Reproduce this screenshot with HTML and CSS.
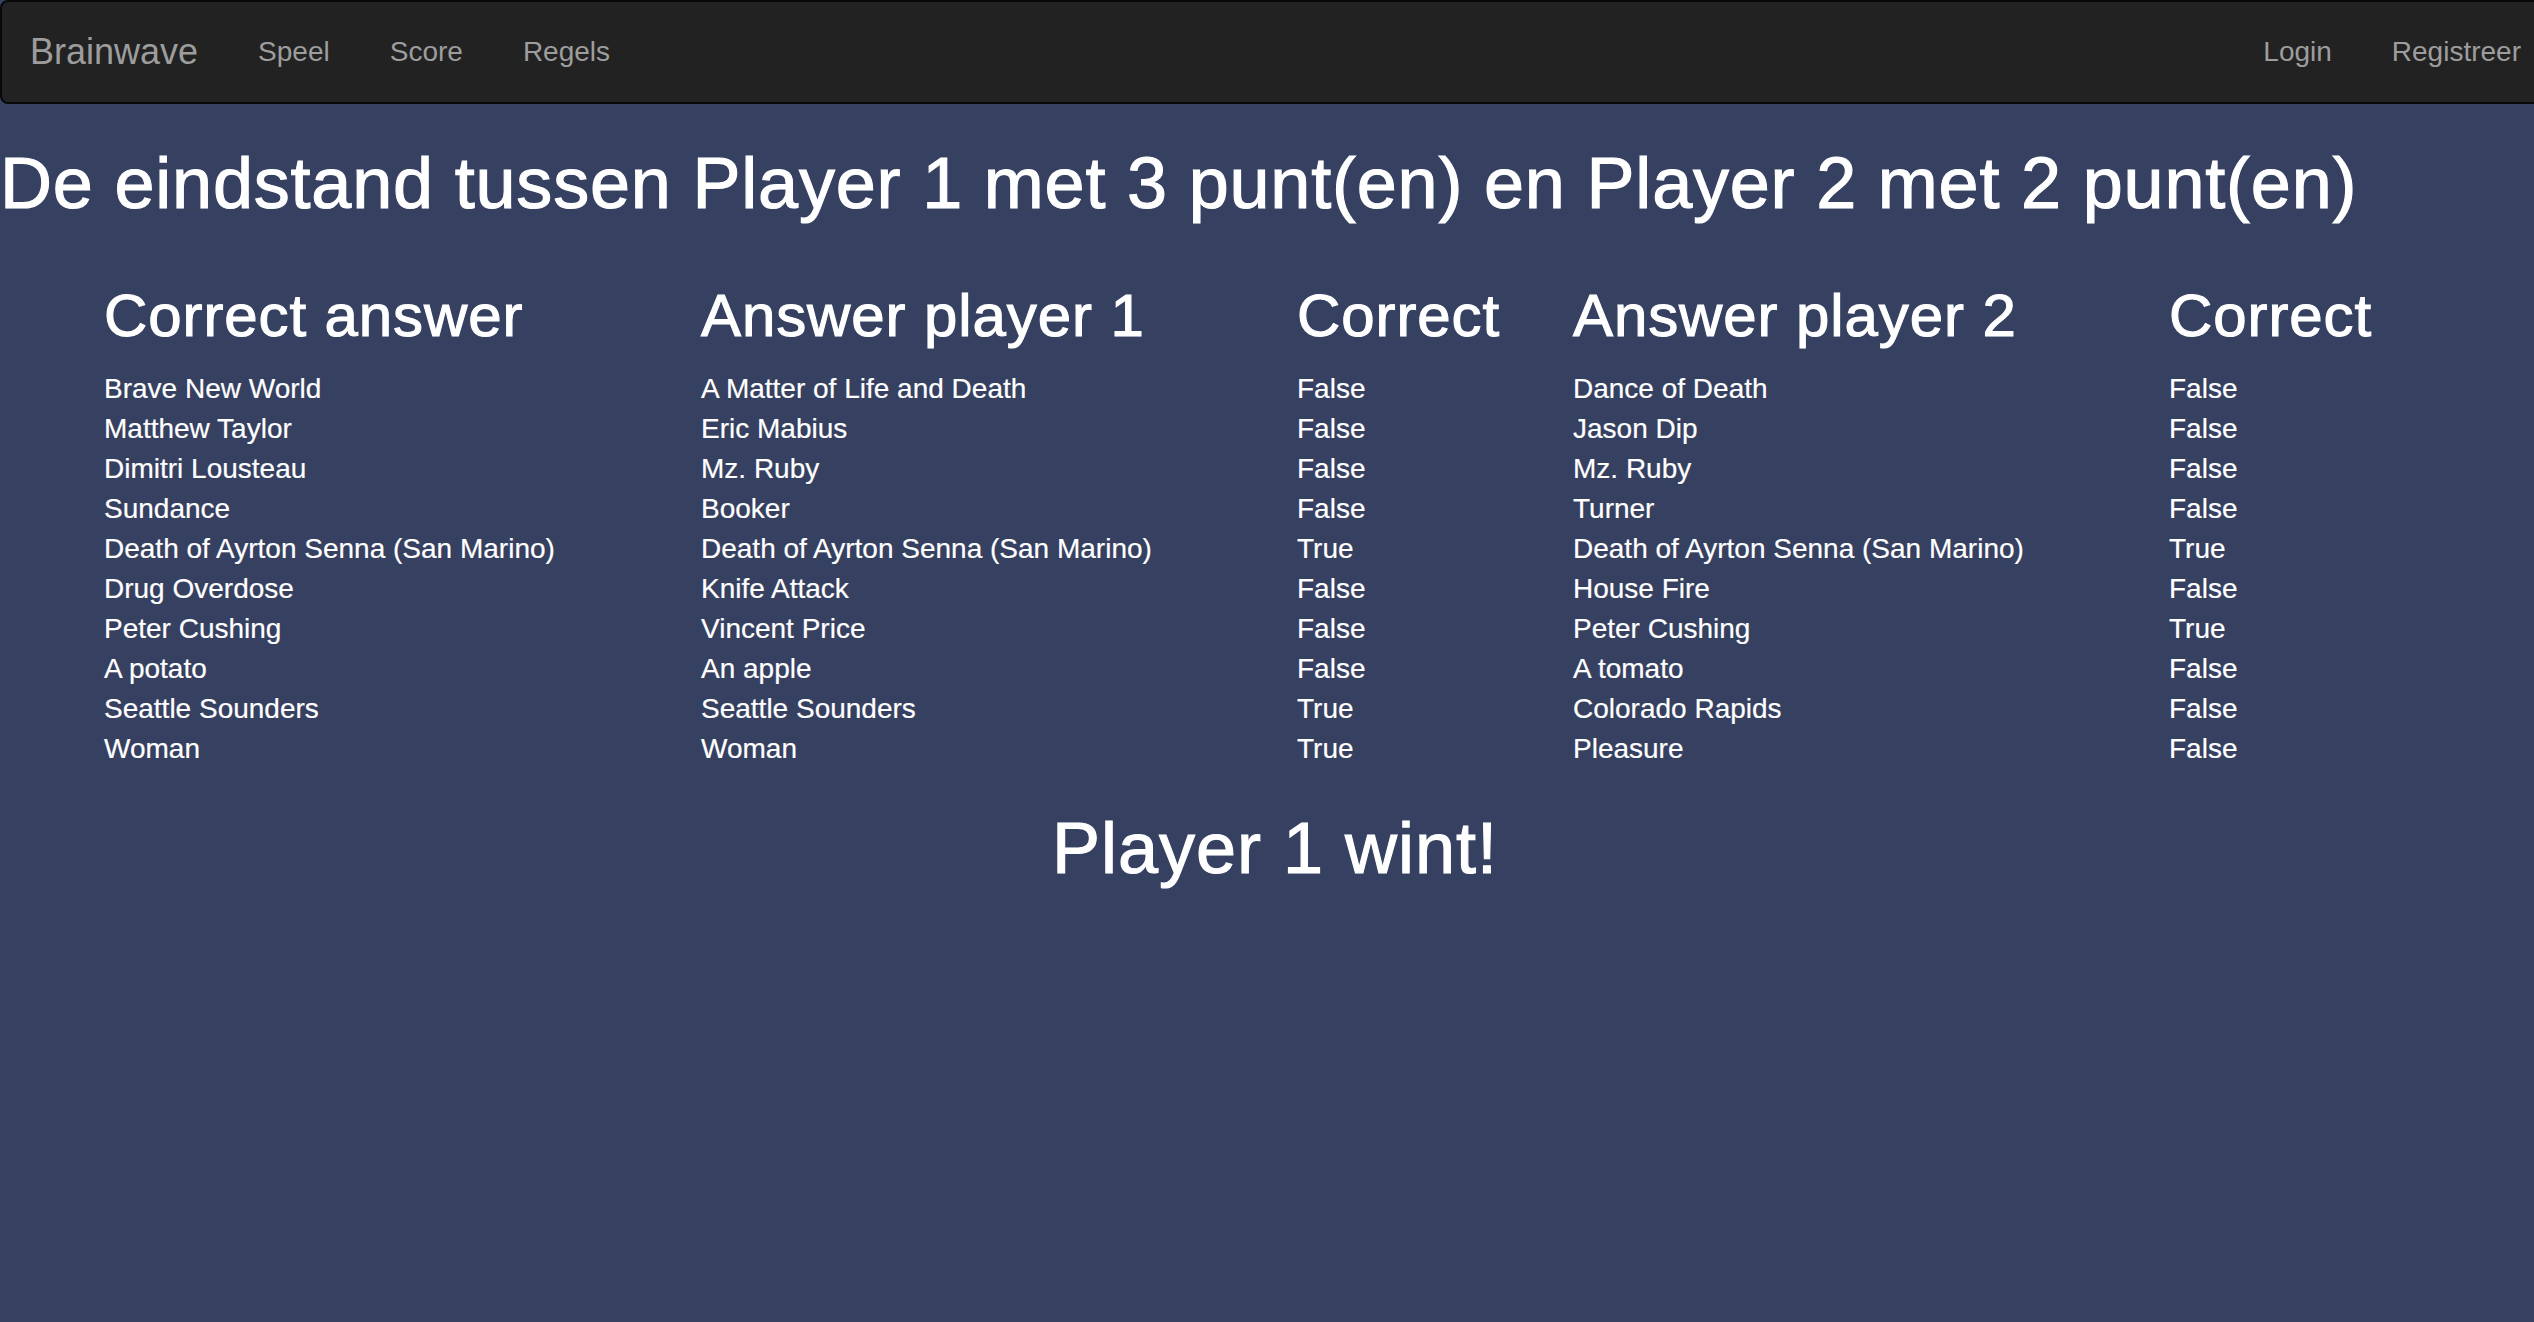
FILE: index.html
```html
<!DOCTYPE html>
<html lang="nl">
<head>
<meta charset="utf-8">
<title>Brainwave - Score</title>
<link rel="stylesheet" href="styles.css">
</head>
<body>
<div class="page">
  <nav class="navbar">
    <div class="navbar-inner">
      <a class="brand" href="#">Brainwave</a>
      <ul class="nav">
        <li><a href="#">Speel</a></li>
        <li><a href="#">Score</a></li>
        <li><a href="#">Regels</a></li>
      </ul>
      <ul class="nav nav-right">
        <li><a href="#">Login</a></li>
        <li><a href="#">Registreer</a></li>
      </ul>
    </div>
  </nav>

  <h1 class="result-title">De eindstand tussen Player 1 met 3 punt(en) en Player 2 met 2 punt(en)</h1>

  <div class="container">
    <table class="results">
      <colgroup>
        <col class="c-answer">
        <col class="c-p1">
        <col class="c-ok1">
        <col class="c-p2">
        <col class="c-ok2">
      </colgroup>
      <thead>
        <tr>
          <th><h2>Correct answer</h2></th>
          <th><h2>Answer player 1</h2></th>
          <th><h2>Correct</h2></th>
          <th><h2>Answer player 2</h2></th>
          <th><h2>Correct</h2></th>
        </tr>
      </thead>
      <tbody>
        <tr><td>Brave New World</td><td>A Matter of Life and Death</td><td>False</td><td>Dance of Death</td><td>False</td></tr>
        <tr><td>Matthew Taylor</td><td>Eric Mabius</td><td>False</td><td>Jason Dip</td><td>False</td></tr>
        <tr><td>Dimitri Lousteau</td><td>Mz. Ruby</td><td>False</td><td>Mz. Ruby</td><td>False</td></tr>
        <tr><td>Sundance</td><td>Booker</td><td>False</td><td>Turner</td><td>False</td></tr>
        <tr><td>Death of Ayrton Senna (San Marino)</td><td>Death of Ayrton Senna (San Marino)</td><td>True</td><td>Death of Ayrton Senna (San Marino)</td><td>True</td></tr>
        <tr><td>Drug Overdose</td><td>Knife Attack</td><td>False</td><td>House Fire</td><td>False</td></tr>
        <tr><td>Peter Cushing</td><td>Vincent Price</td><td>False</td><td>Peter Cushing</td><td>True</td></tr>
        <tr><td>A potato</td><td>An apple</td><td>False</td><td>A tomato</td><td>False</td></tr>
        <tr><td>Seattle Sounders</td><td>Seattle Sounders</td><td>True</td><td>Colorado Rapids</td><td>False</td></tr>
        <tr><td>Woman</td><td>Woman</td><td>True</td><td>Pleasure</td><td>False</td></tr>
      </tbody>
    </table>
  </div>

  <h1 class="winner">Player 1 wint!</h1>
</div>
</body>
</html>
```

FILE: styles.css
```css
html {
  overflow: hidden;
  background: #364060;
}

body {
  margin: 0;
  background: #364060;
  color: #ffffff;
  font-family: "Liberation Sans", Arial, Helvetica, sans-serif;
  font-size: 28px;
  line-height: 40px;
}

.page {
  width: 2550px;
  min-height: 1322px;
}

/* Navbar */
.navbar {
  background: #222222;
  border: 2px solid #080808;
  border-radius: 8px;
  margin-bottom: 40px;
}

.navbar-inner {
  display: flex;
  align-items: flex-start;
  min-height: 100px;
}

.navbar a {
  text-decoration: none;
  color: #9d9d9d;
}

.brand {
  display: block;
  height: 100px;
  box-sizing: border-box;
  padding: 30px 30px;
  font-size: 36px;
  line-height: 40px;
  margin-left: -2px;
}

.nav {
  display: flex;
  list-style: none;
  margin: 0;
  padding: 0;
}

.nav a {
  display: block;
  padding: 30px 30px;
  font-size: 28px;
  line-height: 40px;
}

.nav-right {
  margin-left: auto;
  margin-right: -3px;
}

/* Headings */
.result-title,
.winner,
.results h2 {
  font-weight: 500;
  -webkit-text-stroke: 1.1px #ffffff;
}

.result-title {
  margin: 40px 0 20px;
  font-size: 72px;
  line-height: 79px;
  letter-spacing: 0.8px;
}

.container {
  width: 2340px;
  margin: 0 auto;
}

.results {
  width: 2340px;
  margin-left: -1px;
  border-collapse: collapse;
  table-layout: fixed;
}

.c-answer { width: 597px; }
.c-p1 { width: 596px; }
.c-ok1 { width: 276px; }
.c-p2 { width: 596px; }
.c-ok2 { width: 275px; }

.results th,
.results td {
  padding: 0;
  text-align: left;
  vertical-align: top;
  white-space: nowrap;
}

.results td {
  -webkit-text-stroke: 0.2px #ffffff;
}

.results h2 {
  margin: 40px 0 20px;
  font-size: 60px;
  line-height: 66px;
  letter-spacing: 0.9px;
}

.winner {
  margin: 40px 0 20px;
  font-size: 72px;
  line-height: 79px;
  letter-spacing: 1px;
  text-align: center;
}
```
